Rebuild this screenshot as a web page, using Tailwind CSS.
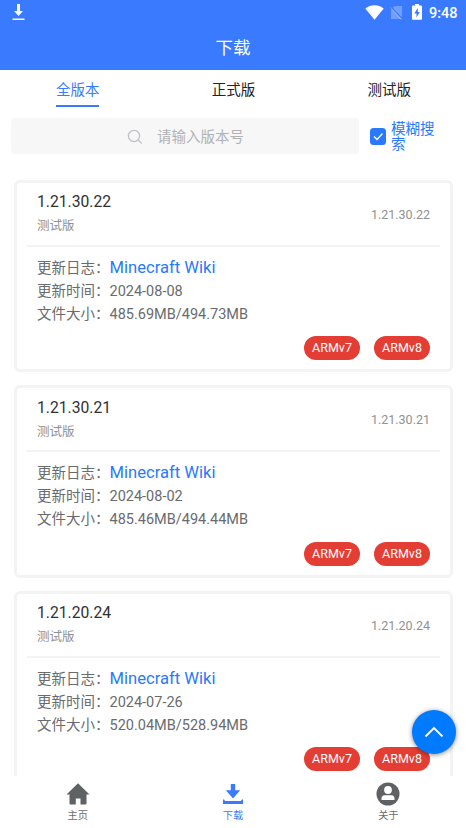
<!DOCTYPE html>
<html lang="zh-CN">
<head>
  <meta charset="UTF-8" />
  <meta name="viewport" content="width=device-width, initial-scale=1" />
  <title>下载</title>
  <script src="https://cdn.jsdelivr.net/npm/@tailwindcss/browser@4"></script>
  <style>
    body {
      font-family: Roboto, 'Noto Sans CJK SC', sans-serif;
    }
  </style>
</head>
<body class="bg-white h-screen flex flex-col overflow-hidden text-[#6a6b6e]">
  <!-- Status bar + title -->
  <header class="bg-[#3a7aff] h-[70px] shrink-0 flex flex-col text-white">
    <div class="h-6 shrink-0 flex items-center pl-3 pr-2">
      <svg class="w-[13px] h-[17px]" viewBox="0 0 13 17" fill="#fff">
        <path d="M5 0h3v7h3L6.500 12 2 7h3z" />
        <path d="M.5 14.500h12V16H.5z" />
      </svg>
      <svg class="ml-auto w-[19px] h-[15px]" viewBox="0 0 19 15" fill="#fff">
        <path d="M9.500 14.800.3 3.600C5.200-.9 13.800-.9 18.700 3.600z" />
      </svg>
      <svg class="ml-[6px] w-[13px] h-[15px]" viewBox="0 0 13 15">
        <path d="M4.500 1H12v13H1V4.500z" fill="#fff" fill-opacity=".28" />
        <path d="M.5 1.500 12.500 14" stroke="#3a7aff" stroke-width="1.500" />
        <path d="M0 2.200 11.500 14.500" stroke="#fff" stroke-opacity=".35" />
      </svg>
      <svg class="ml-[9px] w-[10px] h-[16px]" viewBox="0 0 10 16">
        <path d="M3 0h4v1.600h2.200q.8 0 .8.800V15q0 .8-.8.800H.8Q0 15.800 0 15V2.400q0-.8.800-.8H3z" fill="#fff" />
        <path d="M5.800 4 2.300 9.500h2.200V13.500L7.800 8H5.800z" fill="#3a7aff" />
      </svg>
      <span class="ml-[7px] w-[29px] text-[14.500px] leading-6 pt-[3px] font-medium">9:48</span>
    </div>
    <h1 class="flex-1 text-center text-[17.500px] leading-[48px]">下载</h1>
  </header>

  <!-- Tabs -->
  <nav class="grid grid-cols-3 h-[37px] shrink-0 text-[14.500px] leading-[41px] text-[#222]">
    <a class="justify-self-center h-[37px] border-b-2 border-[#3a7aff] text-[#3a7aff]">全版本</a>
    <a class="justify-self-center pl-px">正式版</a>
    <a class="justify-self-center pl-[2px]">测试版</a>
  </nav>

  <!-- Search -->
  <div class="mt-[11px] h-9 shrink-0 flex items-center pl-[11px]">
    <div class="w-[348px] h-9 rounded bg-[#f7f7f7] flex items-center pl-[116px] text-[14.500px] text-[#b0b2b6]">
      <svg class="w-[16px] h-[16px] mr-[14px] mt-[2px]" viewBox="0 0 16 16" fill="none" stroke="#bfc1c6" stroke-width="1.300">
        <circle cx="7" cy="7" r="5.600" />
        <path d="m11 11 3.800 3.500" />
      </svg>
      <span class="pt-[4px]">请输入版本号</span>
    </div>
    <svg class="ml-[11px] w-[16px] h-[17px] mt-px" viewBox="0 0 16 17">
      <rect width="16" height="17" rx="3.500" fill="#2979ff" />
      <path d="m4 8.500 3 3 5.500-6" fill="none" stroke="#fff" stroke-width="1.300" />
    </svg>
    <span class="ml-[5px] w-[46px] pt-px text-[14.500px] leading-[15px] text-[#2979ff]">模糊搜索</span>
  </div>

  <!-- Version list -->
  <main class="flex-1 min-h-0 overflow-hidden pt-[25.500px] pl-[14px] pr-[13px] flex flex-col gap-[13px]">
    <section class="h-[192.500px] shrink-0 border-3 border-[#f3f3f4] rounded-md px-[10px]">
      <div class="h-[64px] border-b-2 border-[#f3f3f4] flex items-center justify-between px-[10px]">
        <div>
          <h2 class="text-[15.700px] leading-[25px] text-[#303133]">1.21.30.22</h2>
          <p class="text-[12.500px] leading-6 text-[#909193]">测试版</p>
        </div>
        <span class="text-[12.500px] pt-[3px] text-[#909193]">1.21.30.22</span>
      </div>
      <div class="px-[10px] pt-[10px] text-[14.500px] leading-[23px]">
        <p class="flex">更新日志：<a class="text-[16.600px] leading-[22px] text-[#2979ff]">Minecraft Wiki</a></p>
        <p>更新时间：2024-08-08</p>
        <p>文件大小：485.69MB/494.73MB</p>
      </div>
      <div class="mt-[10.500px] px-[10px] flex justify-end gap-[14px] text-[12.500px] leading-6 text-white">
        <span class="w-14 h-6 rounded-full bg-[#e43d33] text-center">ARMv7</span>
        <span class="w-14 h-6 rounded-full bg-[#e43d33] text-center">ARMv8</span>
      </div>
    </section>

    <section class="h-[192.500px] shrink-0 border-3 border-[#f3f3f4] rounded-md px-[10px]">
      <div class="h-[64px] border-b-2 border-[#f3f3f4] flex items-center justify-between px-[10px]">
        <div>
          <h2 class="text-[15.700px] leading-[25px] text-[#303133]">1.21.30.21</h2>
          <p class="text-[12.500px] leading-6 text-[#909193]">测试版</p>
        </div>
        <span class="text-[12.500px] pt-[3px] text-[#909193]">1.21.30.21</span>
      </div>
      <div class="px-[10px] pt-[10px] text-[14.500px] leading-[23px]">
        <p class="flex">更新日志：<a class="text-[16.600px] leading-[22px] text-[#2979ff]">Minecraft Wiki</a></p>
        <p>更新时间：2024-08-02</p>
        <p>文件大小：485.46MB/494.44MB</p>
      </div>
      <div class="mt-[10.500px] px-[10px] flex justify-end gap-[14px] text-[12.500px] leading-6 text-white">
        <span class="w-14 h-6 rounded-full bg-[#e43d33] text-center">ARMv7</span>
        <span class="w-14 h-6 rounded-full bg-[#e43d33] text-center">ARMv8</span>
      </div>
    </section>

    <section class="h-[192.500px] shrink-0 border-3 border-[#f3f3f4] rounded-md px-[10px]">
      <div class="h-[64px] border-b-2 border-[#f3f3f4] flex items-center justify-between px-[10px]">
        <div>
          <h2 class="text-[15.700px] leading-[25px] text-[#303133]">1.21.20.24</h2>
          <p class="text-[12.500px] leading-6 text-[#909193]">测试版</p>
        </div>
        <span class="text-[12.500px] pt-[3px] text-[#909193]">1.21.20.24</span>
      </div>
      <div class="px-[10px] pt-[10px] text-[14.500px] leading-[23px]">
        <p class="flex">更新日志：<a class="text-[16.600px] leading-[22px] text-[#2979ff]">Minecraft Wiki</a></p>
        <p>更新时间：2024-07-26</p>
        <p>文件大小：520.04MB/528.94MB</p>
      </div>
      <div class="mt-[10.500px] px-[10px] flex justify-end gap-[14px] text-[12.500px] leading-6 text-white">
        <span class="w-14 h-6 rounded-full bg-[#e43d33] text-center">ARMv7</span>
        <span class="w-14 h-6 rounded-full bg-[#e43d33] text-center">ARMv8</span>
      </div>
    </section>
  </main>

  <!-- Bottom tab bar -->
  <footer class="h-[52px] shrink-0 bg-white grid grid-cols-3 text-[10.200px] leading-[14px]">
    <a class="flex flex-col items-center pt-[6px]">
      <svg class="w-6 h-6" viewBox="0 0 24 24" fill="#606163">
        <path d="M12 1.200 23.500 12.500H20.500V21.500q0 1-1 1H14.500V16.500H9.800V22.500H4.500q-1 0-1-1V12.500H.5z" />
      </svg>
      <span class="mt-[3px]">主页</span>
    </a>
    <a class="flex flex-col items-center pt-[6px] text-[#3a7aff]">
      <svg class="w-6 h-6" viewBox="0 0 24 24" fill="#3a7aff">
        <path d="M9.800 2h4.400v6.200h5L12 16.500 4.800 8.200h5z" />
        <path d="M2 17.500h1.200L4 19h16l.8-1.500H22V22H2z" />
      </svg>
      <span class="mt-[3px]">下载</span>
    </a>
    <a class="flex flex-col items-center pt-[6px]">
      <svg class="w-6 h-6" viewBox="0 0 24 24">
        <circle cx="12" cy="12" r="11.500" fill="#606163" />
        <circle cx="12" cy="8" r="3.900" fill="#fff" />
        <path d="M5.500 18v-1.500q0-3 3-3.300h7q3 .3 3 3.300V18z" fill="#fff" />
      </svg>
      <span class="mt-[3px]">关于</span>
    </a>
  </footer>

  <!-- Back to top -->
  <button class="absolute left-[412px] top-[710px] w-11 h-11 rounded-full bg-[#007aff] shadow-[0_1px_5px_rgba(0,0,0,0.45)] flex items-center justify-center">
    <svg class="w-5 h-3" viewBox="0 0 20 12" fill="none" stroke="#fff" stroke-width="1.800">
      <path d="M1.500 10.500 10 2l8.500 8.500" />
    </svg>
  </button>
</body>
</html>
